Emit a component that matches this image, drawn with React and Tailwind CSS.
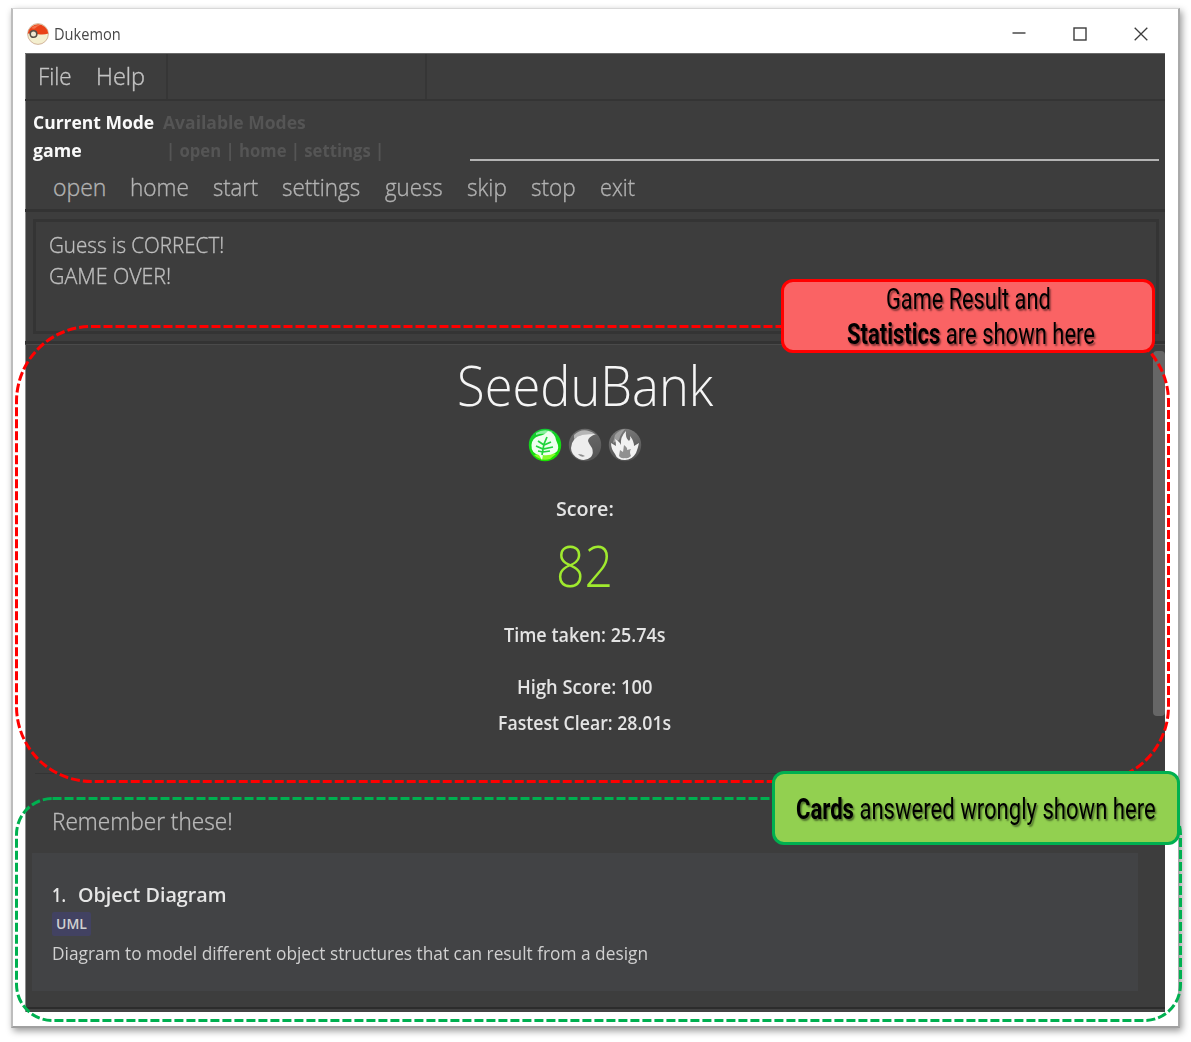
import React, { useLayoutEffect, useRef } from "react";

// Text stretched or condensed horizontally to fill the width of its box.
function Fit({ className = "", children }) {
  const outer = useRef(null);
  const inner = useRef(null);
  useLayoutEffect(() => {
    const fit = () => {
      const scale = outer.current.offsetWidth / inner.current.offsetWidth;
      inner.current.style.transform = `scaleX(${scale})`;
    };
    fit();
    document.fonts.ready.then(fit);
  }, []);
  return (
    <span ref={outer} className={`block shrink-0 whitespace-nowrap ${className}`}>
      <span ref={inner} className="inline-block origin-left align-top">
        {children}
      </span>
    </span>
  );
}

function Pokeball() {
  return (
    <svg width="22" height="22" viewBox="0 0 22 22">
      <circle cx="11" cy="11" r="10.4" fill="#f4efcf" stroke="#c9a68c" strokeWidth="0.8" />
      <path d="M0.8 10.6A10.3 10.3 0 0 1 21.3 10.6Q17 12 11 11.2Q5 10.6 0.8 10.6Z" fill="#ea4218" />
      <path d="M4 5Q8 1.5 13 2.2Q10 3 8 5.5Q6 6 4 5Z" fill="#f4744c" />
      <circle cx="6.5" cy="11" r="3.3" fill="#efe9d2" stroke="#595047" strokeWidth="1.6" />
    </svg>
  );
}

function Orb({ id, from, to, children }) {
  return (
    <svg width="34" height="34" viewBox="0 0 34 34">
      <defs>
        <linearGradient id={id} x1="0" y1="0" x2="0.2" y2="1">
          <stop offset="0" stopColor={from} />
          <stop offset="1" stopColor={to} />
        </linearGradient>
        <filter id={`${id}-soft`}>
          <feGaussianBlur stdDeviation="0.6" />
        </filter>
      </defs>
      <circle cx="17" cy="17" r="16.2" fill={`url(#${id})`} />
      <g filter={`url(#${id}-soft)`}>{children}</g>
    </svg>
  );
}

function Leaf() {
  return (
    <Orb id="leaf" from="#12c93a" to="#17e300">
      <path d="M6 27Q13 33.5 22 31L28 26L20 24Z" fill="#86fb2c" />
      <path d="M8 5Q16 0 25 4L20 6Q13 5 8 7Z" fill="#8cf0a0" />
      <path d="M20 3Q27 5 28 12Q33 22 27 25Q21 28 15 27L14 32L11 27Q3 25 3.5 17Q4 10 11 8Q17 7 20 3Z" fill="#efffef" />
      <path d="M19 9L16 16L14 27M10 13L16 17L23 14M8 18L15 21L25 19M10 23L15 24L22 23" fill="none" stroke="#20d43c" strokeWidth="1.7" />
    </Orb>
  );
}

function Drop() {
  return (
    <Orb id="drop" from="#6d6d6d" to="#565656">
      <path d="M6 7Q15 -2 27 6L22 8Q14 5 6 11Z" fill="#b5b5b5" />
      <path d="M28 6Q20 9 20 13Q21 16 24 20Q26 25 23 29Q18 33.5 11 31Q3 27 3 20Q4 9 14 7Q22 6 28 6Z" fill="#ededed" />
      <path d="M10 26Q14 26 17 28Q13 30 10 26Z" fill="#8c8c8c" />
    </Orb>
  );
}

function Flame() {
  return (
    <Orb id="flame" from="#7d7d7d" to="#525252">
      <path d="M7 7Q11 2 17 1Q12 7 11 12L5 15Z" fill="#9e9e9e" />
      <path d="M18 3Q17 10 21 13Q23 11 22 8Q26 13 26 18L31 15Q30 20 28 25Q24 32 17 32Q9 32 7 26Q3 21 3 15L8 18Q8 14 7 11Q12 14 13 17Q12 9 18 3Z" fill="#f2f2f2" />
      <path d="M16 17Q20 20 19 22L23 21Q21 24 23 28Q20 31 17 30Q13 31 11 28L12 22L15 24Z" fill="#909090" />
    </Orb>
  );
}

function TitleBar() {
  return (
    <header className="flex h-[44px] items-center pt-[5px] pl-[14px] pr-[30px]">
      <Pokeball />
      <Fit className="ml-[5px] w-[67px] text-[15.5px] leading-[22px] text-[#484848]">Dukemon</Fit>
      <div className="ml-auto flex items-center gap-[47px] text-[#3c3c3c]">
        <svg width="14" height="14" viewBox="0 0 14 14"><path d="M0.5 6H13.5" stroke="currentColor" strokeWidth="1.4" /></svg>
        <svg width="14" height="14" viewBox="0 0 14 14"><rect x="1" y="1" width="12" height="12" fill="none" stroke="currentColor" strokeWidth="1.4" /></svg>
        <svg width="14" height="14" viewBox="0 0 14 14"><path d="M0.7 0.7L13.3 13.3M13.3 0.7L0.7 13.3" stroke="currentColor" strokeWidth="1.3" /></svg>
      </div>
    </header>
  );
}

function MenuBar() {
  return (
    <nav className="flex h-[48px] border-b-2 border-[#343434] border-t border-t-[#6a6a6a] text-[23px] leading-[44px] font-light text-[#c4c4c4] [-webkit-text-stroke:0.35px]">
      <div className="flex w-[143px] border-r-2 border-[#363636] pl-[13px]">
        <Fit className="w-[34px]">File</Fit>
        <Fit className="ml-[24px] w-[49px]">Help</Fit>
      </div>
      <div className="w-[259px] border-r-2 border-[#363636]" />
    </nav>
  );
}

function Modes() {
  return (
    <section className="h-[111px] border-b-[3px] border-[#333333] pt-[7px]">
      <div className="flex h-[56px] text-[18.5px] leading-[28px] font-bold">
        <div className="w-[130px] pl-[8px] text-[#fafafa]">
          <Fit className="w-[121px]">Current Mode</Fit>
          <Fit className="w-[49px]">game</Fit>
        </div>
        <div className="w-[315px] pl-[8px] text-[#555555]">
          <Fit className="w-[143px]">Available Modes</Fit>
          <Fit className="ml-[3px] w-[218px]">| open | home | settings |</Fit>
        </div>
        <div className="mr-[6px] mb-[3px] flex-1 border-b-2 border-[#b4b4b4]" />
      </div>
      <div className="flex pl-[28px] text-[23px] leading-[46px] font-light text-[#b2b2b2] [-webkit-text-stroke:0.35px]">
        <Fit className="mr-[24px] w-[53px]">open</Fit>
        <Fit className="mr-[24px] w-[59px]">home</Fit>
        <Fit className="mr-[24px] w-[45px]">start</Fit>
        <Fit className="mr-[25px] w-[78px]">settings</Fit>
        <Fit className="mr-[24px] w-[58px]">guess</Fit>
        <Fit className="mr-[24px] w-[40px]">skip</Fit>
        <Fit className="mr-[24px] w-[45px]">stop</Fit>
        <Fit className="w-[35px]">exit</Fit>
      </div>
    </section>
  );
}

function ResultDisplay() {
  return (
    <section className="border-b-[3px] border-[#333333] pr-[6px] pl-[8px] pt-[7px] pb-[7px]">
      <div className="h-[115px] border-[3px] border-[#343434] pt-[7px] pl-[13px] text-[21.5px] leading-[31px] font-light text-[#bebebe] [-webkit-text-stroke:0.35px]">
        <Fit className="w-[175px]">Guess is CORRECT!</Fit>
        <Fit className="w-[122px]">GAME OVER!</Fit>
      </div>
    </section>
  );
}

function Statistics() {
  return (
    <section className="flex flex-col items-center text-[19px] leading-[30px] font-semibold text-[#e4e4e4]">
      <Fit className="mt-[1px] w-[256px] text-[56px] leading-[76px] font-light text-[#f5f5f5]">SeeduBank</Fit>
      <div className="mt-[6px] flex gap-[6px]">
        <Leaf />
        <Drop />
        <Flame />
      </div>
      <Fit className="mt-[32px] w-[58px]">Score:</Fit>
      <Fit className="mt-[5px] w-[57px] text-[57px] leading-[72px] font-light text-[#a0ea2e]">82</Fit>
      <Fit className="mt-[19px] w-[162px]">Time taken: 25.74s</Fit>
      <Fit className="mt-[22px] w-[135px]">High Score: 100</Fit>
      <Fit className="mt-[6px] w-[173px]">Fastest Clear: 28.01s</Fit>
    </section>
  );
}

function WrongCards() {
  return (
    <section>
      <Fit className="mt-[32px] ml-[27px] w-[181px] text-[23px] leading-[30px] font-light text-[#bababa] [-webkit-text-stroke:0.35px]">Remember these!</Fit>
      <article className="mt-[17px] ml-[7px] h-[138px] w-[1106px] bg-[#424345] pt-[28px] pl-[20px] text-[#d0d0d0]">
        <div className="flex text-[20px] leading-[28px] font-semibold text-[#e6e6e6]">
          <Fit className="w-[14px]">1.</Fit>
          <Fit className="ml-[12px] w-[149px]">Object Diagram</Fit>
        </div>
        <div className="mt-[3px] flex h-[24px] w-[39px] justify-center rounded-[2px] bg-[#424262] text-[14px] leading-[23px] font-semibold">
          <Fit className="w-[31px]">UML</Fit>
        </div>
        <Fit className="mt-[3px] w-[596px] text-[19px] leading-[28px] font-normal">
          Diagram to model different object structures that can result from a design
        </Fit>
      </article>
    </section>
  );
}

export default function App() {
  return (
    <div className="relative h-[1042px] w-[1191px] overflow-hidden bg-white font-['Open_Sans',sans-serif]">
      <div className="ml-[11px] pt-[8px]">
        <main className="h-[1020px] w-[1169px] border-t border-r-2 border-b-2 border-l-2 border-t-[#d8d8d8] border-r-[#aaaaaa] border-b-[#a0a0a0] border-l-[#bdbdbd] bg-white shadow-[2px_3px_7px_rgba(0,0,0,0.4)]">
          <TitleBar />
          <div className="ml-[12px] flex h-[959px] w-[1140px] flex-col border-l border-[#8c8c8c] bg-[#3d3d3d]">
            <div className="-ml-px">
              <MenuBar />
              <Modes />
              <ResultDisplay />
            </div>
            <div className="-ml-px flex h-[663px] border-t border-[#4a4a4a]">
              <div className="w-[1119px]">
                <Statistics />
                <div className="mt-[35px] ml-[10px] h-px bg-[#343434]" />
                <WrongCards />
              </div>
              <div className="mt-[6px] ml-[9px] h-[365px] w-[12px] rounded-[4px] bg-[#666666]" />
            </div>
            <div className="h-[2px] shrink-0 bg-[#2c2c2c]" />
            <div className="flex-1 bg-[#444444]" />
          </div>
        </main>
      </div>

      <svg className="pointer-events-none absolute inset-0" width="1191" height="1042" fill="none" strokeWidth="3" strokeDasharray="9 3">
        <rect x="16.5" y="326.5" width="1152" height="455" rx="75" stroke="#ff0000" />
        <rect x="16.5" y="798.5" width="1164" height="222" rx="36" stroke="#00b050" />
      </svg>

      <div className="absolute top-[279px] left-[781px] flex h-[74px] w-[374px] flex-col items-center rounded-[12px] border-[3px] border-[#ff0000] bg-[#fa6364] font-[Roboto] text-[29px] leading-[35px] text-black [text-shadow:2px_2px_2px_rgba(0,0,0,0.45)]">
        <Fit className="w-[165px]">Game Result and</Fit>
        <Fit className="ml-[5px] w-[248px]"><b>Statistics</b> are shown here</Fit>
      </div>
      <div className="absolute top-[771px] left-[772px] flex h-[74px] w-[408px] items-center justify-center rounded-[12px] border-[3px] border-[#00b050] bg-[#92d050] font-[Roboto] text-[29px] leading-[35px] text-black [text-shadow:2px_2px_2px_rgba(0,0,0,0.45)]">
        <Fit className="mt-[2px] w-[360px]"><b>Cards</b> answered wrongly shown here</Fit>
      </div>
    </div>
  );
}
